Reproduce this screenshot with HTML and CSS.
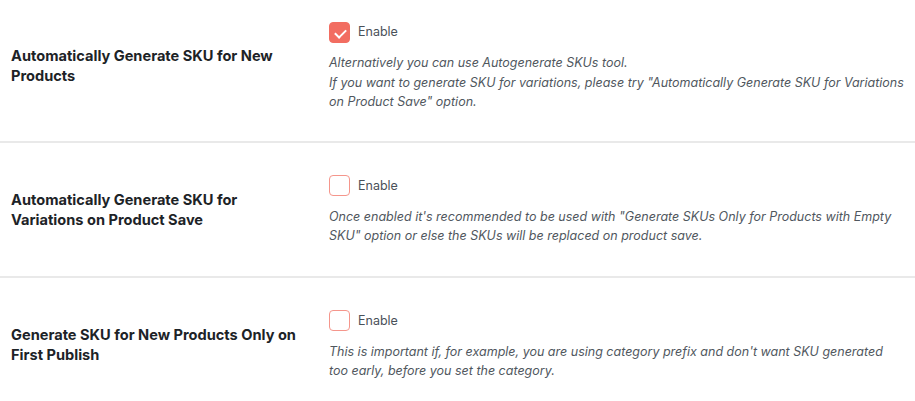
FILE: index.html
```html
<html>
<head>
	<meta charset="utf-8">
	<title>SKU settings</title>
	<link rel="stylesheet" href="styles.css">
</head>
<body>

	<div class="settings">

		<div class="row first">
			<div class="label">Automatically Generate SKU for New Products</div>
			<div class="field">
				<label class="check"><span class="box on"></span>Enable</label>
				<p class="desc">
					Alternatively you can use Autogenerate SKUs tool.<br>
					If you want to generate SKU for variations, please try "Automatically Generate SKU for Variations on Product Save" option.
				</p>
			</div>
		</div>

		<div class="row">
			<div class="label">Automatically Generate SKU for Variations on Product Save</div>
			<div class="field">
				<label class="check"><span class="box"></span>Enable</label>
				<p class="desc">Once enabled it's recommended to be used with "Generate SKUs Only for Products with Empty SKU" option or else the SKUs will be replaced on product save.</p>
			</div>
		</div>

		<div class="row">
			<div class="label">Generate SKU for New Products Only on First Publish</div>
			<div class="field">
				<label class="check"><span class="box"></span>Enable</label>
				<p class="desc">This is important if, for example, you are using category prefix and don't want SKU generated too early, before you set the category.</p>
			</div>
		</div>

	</div>

</body>
</html>
```

FILE: styles.css
```css
* {
	margin: 0;
	padding: 0;
	box-sizing: border-box;
}

body {
	font: 14px Inter, "Noto Sans", sans-serif;
	background: #fff;
	color: #1d2327;
}

.settings {
	width: 915px;
}

.row {
	display: grid;
	grid-template-columns: 329px 1fr;
	align-items: center;
	padding: 32px 0 30px;
	border-bottom: 2px solid #e9e9e9;
}

.row.first {
	padding: 21px 0 29px;
}

.label {
	padding: 0 20px 0 11px;
	font-size: 14.6px;
	font-weight: 700;
	line-height: 20px;
}

.field {
	padding-right: 10px;
}

.check {
	display: flex;
	align-items: center;
	gap: 8px;
	font-size: 12.5px;
	color: #4a5159;
	line-height: 22px;
}

.box {
	width: 21px;
	height: 21px;
	border: 1px solid #f5968c;
	border-radius: 4px;
	background: #fff;
}

.box.on {
	background: #f26d61;
	border-color: #f26d61;
	position: relative;
}

.box.on::after {
	content: "";
	position: absolute;
	left: 6.5px;
	top: 4px;
	width: 5px;
	height: 9px;
	border: solid #fff;
	border-width: 0 2px 2px 0;
	transform: rotate(45deg);
}

.desc {
	margin-top: 10px;
	font-size: 12.5px;
	font-style: italic;
	line-height: 19.5px;
	color: #50575e;
}
```
